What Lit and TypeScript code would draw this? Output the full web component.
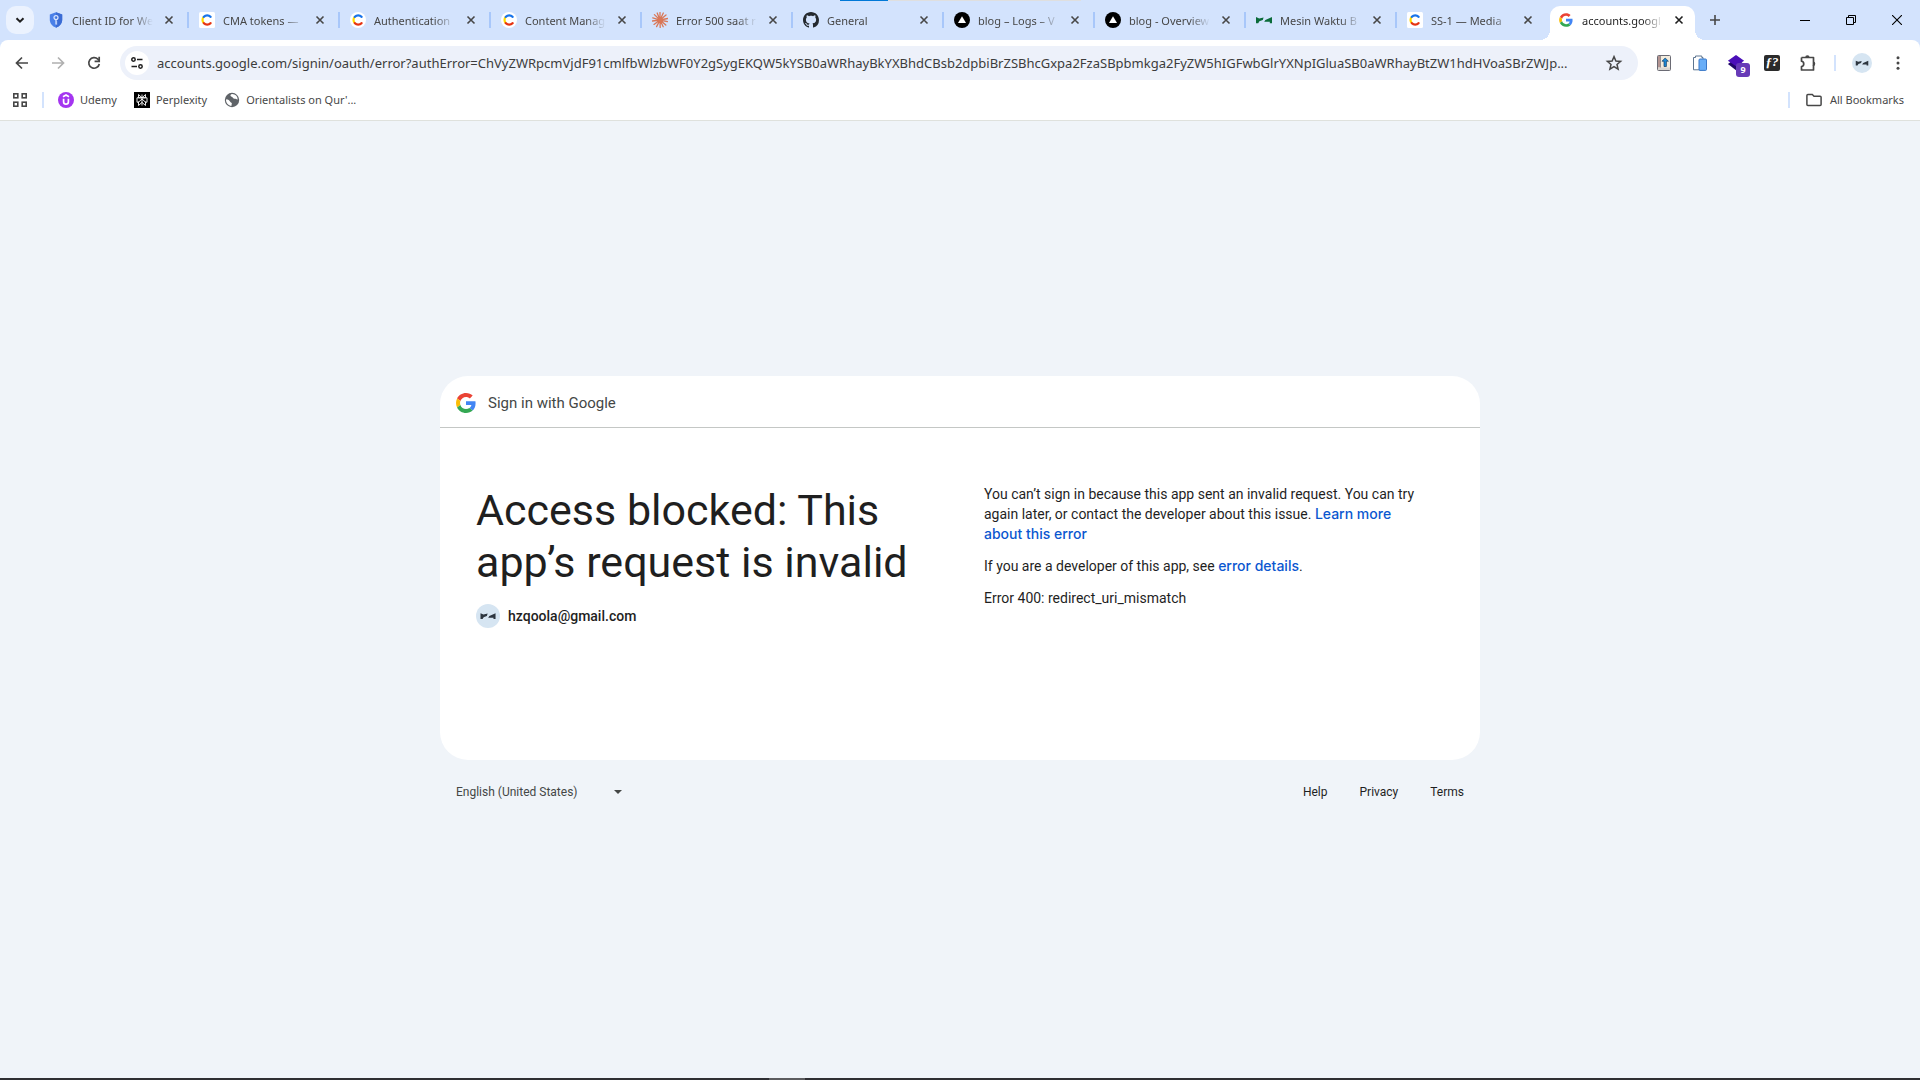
import { LitElement, html, css, svg, type TemplateResult } from "lit";
import { customElement, property } from "lit/decorators.js";
import { classMap } from "lit/directives/class-map.js";

const glyph = (size: number, box: string, body: unknown) => html`
  <svg width=${size} height=${size} viewBox=${box} fill="none" aria-hidden="true">${body}</svg>`;

/* ---- Brand marks ---- */

const googleMark = svg`
  <path fill="#ea4335" d="M24 9.5c3.54 0 6.71 1.22 9.21 3.6l6.85-6.85C35.9 2.38 30.47 0 24 0 14.62 0 6.51 5.38 2.56 13.22l7.98 6.19C12.43 13.72 17.74 9.5 24 9.5z"/>
  <path fill="#4285f4" d="M46.98 24.55c0-1.57-.15-3.09-.38-4.55H24v9.02h12.94c-.58 2.96-2.26 5.48-4.78 7.18l7.73 6c4.51-4.18 7.09-10.36 7.09-17.65z"/>
  <path fill="#fbbc05" d="M10.53 28.59c-.48-1.45-.76-2.99-.76-4.59s.27-3.14.76-4.59l-7.98-6.19C.92 16.46 0 20.12 0 24s.92 7.54 2.56 10.78l7.97-6.19z"/>
  <path fill="#34a853" d="M24 48c6.48 0 11.93-2.13 15.89-5.81l-7.73-6c-2.15 1.45-4.92 2.3-8.16 2.3-6.26 0-11.57-4.22-13.47-9.91l-7.98 6.19C6.51 42.62 14.62 48 24 48z"/>`;
const googleTab = glyph(16, "-4 -4 56 56", googleMark);
const googleCard = glyph(20, "0 0 48 48", googleMark);

const contentfulArcs = svg`
  <path d="M4.9 11.2a4.4 4.4 0 0 1 0-6.4" stroke="#ffd800" stroke-width="2.2"/>
  <path d="M4.9 4.8a4.5 4.5 0 0 1 6.6 0" stroke="#1773eb" stroke-width="2.4" stroke-linecap="round"/>
  <path d="M4.9 11.2a4.5 4.5 0 0 0 6.6 0" stroke="#e63312" stroke-width="2.4" stroke-linecap="round"/>`;
const contentfulSquare = glyph(16, "0 0 16 16", svg`<rect width="16" height="16" rx="1.5" fill="#fff"/>${contentfulArcs}`);
const contentfulRound = glyph(16, "0 0 16 16", svg`<circle cx="8" cy="8" r="8" fill="#fff"/>${contentfulArcs}`);

const shield = glyph(16, "0 0 16 16", svg`
  <path d="M8 .3 14.2 2.4v5.4c0 3.7-2.5 6.6-6.2 7.9C4.3 14.4 1.8 11.5 1.8 7.8V2.4z" fill="#4a80e8"/>
  <path d="M8 .3 14.2 2.4v5.4c0 3.7-2.5 6.6-6.2 7.9z" fill="#3b6cd4"/>
  <circle cx="8" cy="5.6" r="2" stroke="#dbe7ff" stroke-width="1.2"/>
  <path d="M8 7.6v5M8 10h1.2M8 12h1.2" stroke="#dbe7ff" stroke-width="1.2"/>`);

const burst = glyph(16, "-8 -8 16 16", svg`
  <path d="M0 0 0-7.6M0 0 3.3-7M0 0 6-5M0 0 7.7-1.5M0 0 7.4 1.7M0 0 5.8 5M0 0 3.2 6.7M0 0 .2 7.6M0 0-3.4 6.6M0 0-6 4.4M0 0-7.7 1M0 0-7.2-2.2M0 0-5.6-5.4M0 0-2.8-7"
    stroke="#d97757" stroke-width="1.3" stroke-linecap="round"/>
  <circle r="2.4" fill="#d97757"/>`);

const github = glyph(16, "0 0 16 16", svg`
  <path fill="#24292f" d="M8 0C3.58 0 0 3.58 0 8c0 3.54 2.29 6.53 5.47 7.59.4.07.55-.17.55-.38 0-.19-.01-.82-.01-1.49-2.01.37-2.53-.49-2.69-.94-.09-.23-.48-.94-.82-1.13-.28-.15-.68-.52-.01-.53.63-.01 1.08.58 1.23.82.72 1.21 1.87.87 2.33.66.07-.52.28-.87.51-1.07-1.78-.2-3.64-.89-3.64-3.95 0-.87.31-1.59.82-2.15-.08-.2-.36-1.02.08-2.12 0 0 .67-.21 2.2.82.64-.18 1.32-.27 2-.27s1.36.09 2 .27c1.53-1.04 2.2-.82 2.2-.82.44 1.1.16 1.92.08 2.12.51.56.82 1.27.82 2.15 0 3.07-1.87 3.75-3.65 3.95.29.25.54.73.54 1.48 0 1.07-.01 1.93-.01 2.2 0 .21.15.46.55.38A8.01 8.01 0 0 0 16 8c0-4.42-3.58-8-8-8z"/>`);

const vercel = glyph(16, "0 0 16 16", svg`<circle cx="8" cy="8" r="8" fill="#000"/><path d="M8 4.2 12 11H4z" fill="#fff"/>`);

const bowtie = svg`
  <path d="M0 5 3.2 6.4 7.6 5.4 6.8 8 3.4 9.2 2.2 11.2H0z"/>
  <path d="M16 5v6.2h-2.2V9.8H8.200L9.4 8z"/>`;
const mesin = glyph(16, "0 0 16 16", svg`<g fill="#0b6b3a">${bowtie}</g>`);
const avatar = (size: number) => glyph(size, "0 0 24 24", svg`
  <circle cx="12" cy="12" r="12" fill="#d6e5f2"/><g fill="#2d3640" transform="translate(4.5 4.500) scale(.94)">${bowtie}</g>`);

const udemy = glyph(16, "0 0 16 16", svg`
  <circle cx="8" cy="8" r="8" fill="#a435f0"/>
  <path d="M5 4.8 8 3l3 1.8M5.6 6.8v3a2.4 2.4 0 0 0 4.8 0v-3" stroke="#fff" stroke-width="1.7"/>`);

const perplexity = glyph(16, "0 0 16 16", svg`
  <rect width="16" height="16" fill="#000"/>
  <path d="M8 2.5v11M4.5 2.5 8 5.8l3.5-3.3v3.3h-7zM3 5.800h10v4.4h-1.5L8 7l-3.500 3.200H3zM4.5 9.5v4L8 10.4l3.5 3.100v-4" stroke="#fff" stroke-width=".9"/>`);

const globe = glyph(16, "0 0 16 16", svg`
  <circle cx="8" cy="8" r="7.2" fill="#5f6368"/>
  <path d="M2.3 7.200c2 .2 3.200 1 3.700 2.200.4 1 1.500.8 1.800 1.800.2.9-.5 1.600-.3 2.700-3-.2-5.400-2.600-5.500-5.600z" fill="#fff"/>
  <path d="M8.200 2.100c-1.500.4-2 1.200-1.600 2 .5.9 1.800.6 2.100 1.500.2.8 1 1.200 2 1.100 1.200-.1 1.700.9 3 .7A5.900 5.900 0 0 0 8.200 2.100z" fill="#fff"/>`);

/* ---- Browser glyphs ---- */

const chevron = glyph(16, "0 0 16 16", svg`<path d="m4.500 6.200 3.500 3.500 3.500-3.500" stroke="#1f1f1f" stroke-width="2"/>`);
const cross = glyph(10, "0 0 10 10", svg`<path d="m1.500 1.500 7 7m0-7-7 7" stroke="currentColor" stroke-width="1.600"/>`);
const plus = glyph(12, "0 0 12 12", svg`<path d="M6 1v10M1 6h10" stroke="#474747" stroke-width="1.600"/>`);
const back = glyph(16, "0 0 16 16", svg`<path d="M14 8H3M8 2.500 2.500 8 8 13.500" stroke="#474747" stroke-width="1.700"/>`);
const forward = glyph(16, "0 0 16 16", svg`<path d="M2 8h11M8 2.500 13.500 8 8 13.500" stroke="#b0b0b0" stroke-width="1.700"/>`);
const reload = glyph(16, "0 0 16 16", svg`
  <path d="M13.300 9A5.300 5.300 0 1 1 11.900 4.200L13 5.300" stroke="#474747" stroke-width="1.700"/>
  <path d="M13.200 1.800v4.600H8.600" stroke="#474747" stroke-width="1.700"/>`);
const tune = glyph(14, "0 0 14 14", svg`
  <g stroke="#1f1f1f" stroke-width="1.500"><circle cx="3.500" cy="3.500" r="1.700"/><path d="M7 3.500h5.500M1.500 10.500H7"/><circle cx="10.500" cy="10.500" r="1.700"/></g>`);
const star = glyph(18, "0 0 18 18", svg`
  <path d="m9 2.600 1.900 4.400 4.700.4-3.600 3.100 1.100 4.700L9 12.700l-4.100 2.500L6 10.500 2.400 7.400l4.700-.4z" stroke="#474747" stroke-width="1.500"/>`);
const puzzle = glyph(18, "0 0 18 18", svg`
  <path d="M2.500 3.500h12V8M14.500 11.500V16h-12v-3.400c3-.6 3-4.800 0-5.400V3.500" stroke="#474747" stroke-width="1.700" stroke-linejoin="round"/>
  <path d="M6.200 3.500a2.200 2.200 0 0 1 4.400 0zM14 7.500a2.300 2.300 0 0 1 0 4.600z" fill="#474747"/>
  <path d="M14.500 8v4" stroke="#474747" stroke-width="1.700"/>`);
const dots = glyph(16, "0 0 16 16", svg`<g fill="#474747"><circle cx="8" cy="2.800" r="1.500"/><circle cx="8" cy="8" r="1.500"/><circle cx="8" cy="13.200" r="1.500"/></g>`);
const appsGrid = glyph(16, "0 0 16 16", svg`
  <g stroke="#474747" stroke-width="1.600"><rect x="1.800" y="1.800" width="4" height="4"/><rect x="10.200" y="1.800" width="4" height="4"/><rect x="1.800" y="10.200" width="4" height="4"/><rect x="10.200" y="10.200" width="4" height="4"/></g>`);
const folder = glyph(16, "0 0 16 16", svg`<path d="M.9 3.500q0-1 1-1h4.400L8 4.200h6.100q1 0 1 1v7.300q0 1-1 1H1.900q-1 0-1-1z" stroke="#474747" stroke-width="1.500"/>`);
const minimize = glyph(10, "0 0 10 10", svg`<path d="M0 5.500h10" stroke="#000"/>`);
const restore = glyph(10, "0 0 10 10", svg`<path d="M.5 2.500h7v7h-7zM2.500 2V.5h7v7H8" stroke="#000"/>`);
const closeWindow = glyph(10, "0 0 10 10", svg`<path d="m0 0 10 10M10 0 0 10" stroke="#000" stroke-width="1.100"/>`);
const caret = glyph(8, "0 0 8 8", svg`<path d="M0 2h8L4 6z" fill="#444746"/>`);

/* ---- Extension glyphs ---- */

const book = glyph(16, "0 0 16 16", svg`
  <rect x="1.500" y=".5" width="13" height="15" rx="1" fill="#f3ecdd" stroke="#6b6b74"/>
  <path d="M2 1h2.500v11.500H2z" fill="#b39491"/><path d="M2 12.500h12V15H2z" fill="#d9d5d0"/><path d="M4.500 1v11.500" stroke="#6b6b74" stroke-width=".6"/>
  <path d="m9.200 3 3.200 3.200h-2v5.300H8V6.200H6z" fill="#1b8ad8" stroke="#123b63" stroke-width=".7"/>`);
const pages = glyph(16, "0 0 16 16", svg`
  <path d="M1.500 2.500h2V1h6.300v1.500H11v12.300H1.500z" fill="#fff" stroke="#5d7590"/>
  <rect x="7" y="4" width="7.500" height="11.400" rx="1" fill="#69aef8" stroke="#3b78c8"/>`);
const layers = glyph(18, "0 0 20 20", svg`
  <path d="m1 11 8.500-6 9.500 6-9 7z" fill="#1f0668"/><path d="M1 7.500 10 1l9 6.500-9 6z" fill="#4a0fb8"/>`);

type Tab = { title: string; icon: TemplateResult };
const tabs: Tab[] = [
  { title: "Client ID for We", icon: shield },
  { title: "CMA tokens —", icon: contentfulSquare },
  { title: "Authentication", icon: contentfulRound },
  { title: "Content Manag", icon: contentfulRound },
  { title: "Error 500 saat r", icon: burst },
  { title: "General", icon: github },
  { title: "blog – Logs – V", icon: vercel },
  { title: "blog - Overview", icon: vercel },
  { title: "Mesin Waktu B", icon: mesin },
  { title: "SS-1 — Media", icon: contentfulSquare },
  { title: "accounts.googl", icon: googleTab },
];

const address =
  "accounts.google.com/signin/oauth/error?authError=ChVyZWRpcmVjdF91cmlfbWlzbWF0Y2gSygEKQW5kYSB0aWRhayBkYXBhdCBsb2dpbiBrZSBhcGxpa2FzaSBpbmkga2FyZW5hIGFwbGlrYXNpIGluaSB0aWRhayBtZW1hdHVoaSBrZWJp...";

const uiFont = css`"Segoe UI", "Noto Sans", sans-serif`;

@customElement("tab-strip")
export class TabStrip extends LitElement {
  @property({ type: Number }) active = 0;

  static styles = css`
    :host { display: flex; align-items: flex-end; height: 40px; background: #d3e3fd; font: 11px/16px ${uiFont}; }
    svg { display: block; flex: none; }
    button { display: grid; place-items: center; flex: none; padding: 0; border: 0; background: none; font: inherit; }
    .search { align-self: center; width: 28px; height: 28px; margin: 0 4px 0 6px; border-radius: 10px; background: #ebf2fe; }
    .tabs { display: flex; flex: 0 1 1661px; min-width: 0; }
    .tab { position: relative; display: flex; flex: 1 1 0; align-items: center; min-width: 0; height: 34px; padding: 0 10px; box-sizing: border-box; color: #474747; }
    .tab:not(.active):not(.before)::after { content: ""; position: absolute; right: 0; top: 6px; width: 2px; height: 16px; background: #a8c7fa; }
    .shape { display: none; }
    .active { color: #1f1f1f; }
    .active .shape { display: block; position: absolute; inset: 0 4px 0 2px; border-radius: 10px 10px 0 0; background: #fff; }
    .active .shape::before, .active .shape::after { content: ""; position: absolute; bottom: 0; width: 10px; height: 10px; }
    .active .shape::before { right: 100%; background: radial-gradient(circle at 0 0, #d3e3fd 10px, #fff 10px); }
    .active .shape::after { left: 100%; background: radial-gradient(circle at 100% 0, #d3e3fd 10px, #fff 10px); }
    .select { position: relative; display: flex; flex: 1; gap: 8px; align-items: center; min-width: 0; height: 28px; margin-bottom: 6px; color: inherit; text-align: left; }
    .title { flex: 1; overflow: hidden; white-space: nowrap; padding-top: 2px; mask-image: linear-gradient(to right, #000 75%, transparent); }
    .close { position: relative; width: 16px; height: 16px; margin: 0 2px 6px 8px; color: #474747; }
    .active .close { color: #1f1f1f; }
    .new { width: 28px; height: 28px; margin: 0 0 6px 2px; }
    .window { display: flex; align-self: flex-start; margin-left: auto; }
    .window button { width: 46px; height: 40px; }
  `;

  render() {
    return html`
      <button class="search" aria-label="Search tabs">${chevron}</button>
      <div class="tabs" role="tablist">
        ${tabs.map((t, i) => html`
          <div class=${classMap({ tab: true, active: i === this.active, before: i === this.active - 1 })}>
            <span class="shape"></span>
            <button class="select" role="tab" aria-selected=${i === this.active}>${t.icon}<span class="title">${t.title}</span></button>
            <button class="close" aria-label="Close tab">${cross}</button>
          </div>`)}
      </div>
      <button class="new" aria-label="New tab">${plus}</button>
      <div class="window">
        <button aria-label="Minimize">${minimize}</button>
        <button aria-label="Restore">${restore}</button>
        <button aria-label="Close">${closeWindow}</button>
      </div>`;
  }
}

@customElement("browser-toolbar")
export class BrowserToolbar extends LitElement {
  static styles = css`
    :host { display: block; background: #d3e3fd; font: 11px/16px ${uiFont}; color: #474747; }
    svg { display: block; flex: none; }
    button { display: grid; place-items: center; flex: none; padding: 0; border: 0; background: none; font: inherit; color: inherit; }
    .bar { display: flex; align-items: center; height: 46px; padding: 0 4px; border-radius: 8px 8px 0 0; background: #fff; }
    .tool { position: relative; width: 36px; height: 34px; }
    .omnibox { display: flex; flex: 1; align-items: center; min-width: 0; height: 34px; margin: 0 8px; padding: 0 15px 0 5px; border-radius: 17px; background: #edf1fa; gap: 8px; }
    .info { width: 24px; height: 24px; border-radius: 50%; background: #fff; }
    input { flex: 1; min-width: 0; height: 24px; padding: 0; border: 0; outline: 0; background: none; font: 13px/24px ${uiFont}; color: #3c3c3c; text-overflow: ellipsis; }
    .ext { display: flex; }
    .badge { position: absolute; right: 4px; bottom: 3px; width: 14px; height: 14px; border-radius: 3px; background: #673ab7; color: #fff; font: 700 9px/14px ${uiFont}; text-align: center; }
    .ff { width: 16px; height: 16px; border-radius: 2px; background: #2b2b2b; color: #fff; font: italic 700 13px/14px "Liberation Serif", serif; text-align: center; }
    .rule { flex: none; width: 2px; height: 16px; background: #d3e3fd; }
    .bar .rule { margin: 0 8px; }
    .bookmarks { display: flex; align-items: center; height: 28px; padding: 0 16px 6px 12px; border-bottom: 1px solid #dfe1dd; background: #fff; }
    .bookmarks .rule { margin: 0 14px; }
    .mark { display: flex; gap: 6px; align-items: center; margin-right: 17px; color: inherit; text-decoration: none; white-space: nowrap; }
    .all { display: flex; gap: 8px; align-items: center; margin-left: 2px; }
    .push { display: flex; align-items: center; margin-left: auto; }
  `;

  render() {
    return html`
      <nav class="bar" aria-label="Toolbar">
        <button class="tool" aria-label="Back">${back}</button>
        <button class="tool" aria-label="Forward" disabled>${forward}</button>
        <button class="tool" aria-label="Reload">${reload}</button>
        <div class="omnibox">
          <button class="info" aria-label="View site information">${tune}</button>
          <input type="text" aria-label="Address and search bar" .value=${address} spellcheck="false">
          <button aria-label="Bookmark this tab">${star}</button>
        </div>
        <div class="ext">
          <button class="tool" aria-label="Reader">${book}</button>
          <button class="tool" aria-label="Pages">${pages}</button>
          <button class="tool" aria-label="Layers">${layers}<span class="badge">9</span></button>
          <button class="tool" aria-label="Font finder"><span class="ff">ƒ?</span></button>
          <button class="tool" aria-label="Extensions">${puzzle}</button>
        </div>
        <span class="rule"></span>
        <button class="tool" aria-label="Profile">${avatar(20)}</button>
        <button class="tool" aria-label="Menu">${dots}</button>
      </nav>
      <nav class="bookmarks" aria-label="Bookmarks">
        <button aria-label="Apps">${appsGrid}</button>
        <span class="rule"></span>
        <a class="mark" href="#udemy">${udemy}Udemy</a>
        <a class="mark" href="#perplexity">${perplexity}Perplexity</a>
        <a class="mark" href="#orientalists">${globe}Orientalists on Qur'...</a>
        <div class="push"><span class="rule"></span><button class="all">${folder}All Bookmarks</button></div>
      </nav>`;
  }
}

@customElement("sign-in-error")
export class SignInError extends LitElement {
  static styles = css`
    :host { display: flex; flex: 1; flex-direction: column; align-items: center; justify-content: center; background: #f0f4f9; font: 14px/20px "Google Sans", Roboto, sans-serif; color: #1f1f1f; }
    svg { display: block; flex: none; }
    .column { width: 100%; max-width: 1040px; }
    .card { box-sizing: border-box; min-height: 384px; border-radius: 28px; background: #fff; overflow: hidden; }
    .head { display: flex; gap: 12px; align-items: center; box-sizing: border-box; height: 52px; padding: 3px 16px 0; border-bottom: 1px solid #c4c7c5; font-size: 15px; color: #444746; }
    .body { display: grid; grid-template-columns: 1fr 1fr; gap: 48px; padding: 56px 36px 36px; }
    h1 { margin: 0; font: 400 43px/52px "Google Sans", Roboto, sans-serif; }
    .account { display: flex; gap: 8px; align-items: center; margin-top: 16px; font-weight: 500; }
    .text { padding-right: 20px; }
    p { margin: 0 0 12px; }
    a { color: inherit; text-decoration: none; }
    .link { font-family: "Google Sans", Inter, sans-serif; font-weight: 500; color: #0b57d0; }
    footer { display: flex; align-items: center; justify-content: space-between; padding: 22px 16px 21px; font-size: 12px; }
    .lang { display: flex; gap: 8px; align-items: center; color: #444746; }
    select { width: 150px; padding: 0; border: 0; background: none; appearance: none; font: inherit; color: inherit; }
    .links { display: flex; gap: 32px; }
  `;

  render() {
    return html`
      <div class="column">
        <main class="card">
          <div class="head">${googleCard}<span>Sign in with Google</span></div>
          <div class="body">
            <div>
              <h1>Access blocked: This app’s request is invalid</h1>
              <div class="account">${avatar(24)}<span>hzqoola@gmail.com</span></div>
            </div>
            <div class="text">
              <p>You can’t sign in because this app sent an invalid request. You can try again later, or contact the developer about this issue. <a class="link" href="#learn">Learn more about this error</a></p>
              <p>If you are a developer of this app, see <a class="link" href="#details">error details</a>.</p>
              <p>Error 400: redirect_uri_mismatch</p>
            </div>
          </div>
        </main>
        <footer>
          <div class="lang">
            <select aria-label="Change language"><option>English (United States)</option></select>
            ${caret}
          </div>
          <nav class="links" aria-label="Footer"><a href="#help">Help</a><a href="#privacy">Privacy</a><a href="#terms">Terms</a></nav>
        </footer>
      </div>`;
  }
}

@customElement("app-root")
export class AppRoot extends LitElement {
  static styles = css`
    :host { position: relative; display: flex; flex-direction: column; min-height: 100vh; }
    .progress { position: absolute; top: 0; left: 43.75%; width: 241px; height: 1px; background: linear-gradient(to right, #0078d7 48px, #dfdfdf 48px); }
    .taskbar { flex: none; height: 2px; background: linear-gradient(to right, #2f2f33 769px, #5c5c5f 769px, #5c5c5f 805px, #2f2f33 805px); }
  `;

  render() {
    return html`
      <tab-strip .active=${10}></tab-strip>
      <browser-toolbar></browser-toolbar>
      <sign-in-error></sign-in-error>
      <div class="taskbar"></div>
      <div class="progress"></div>`;
  }
}
